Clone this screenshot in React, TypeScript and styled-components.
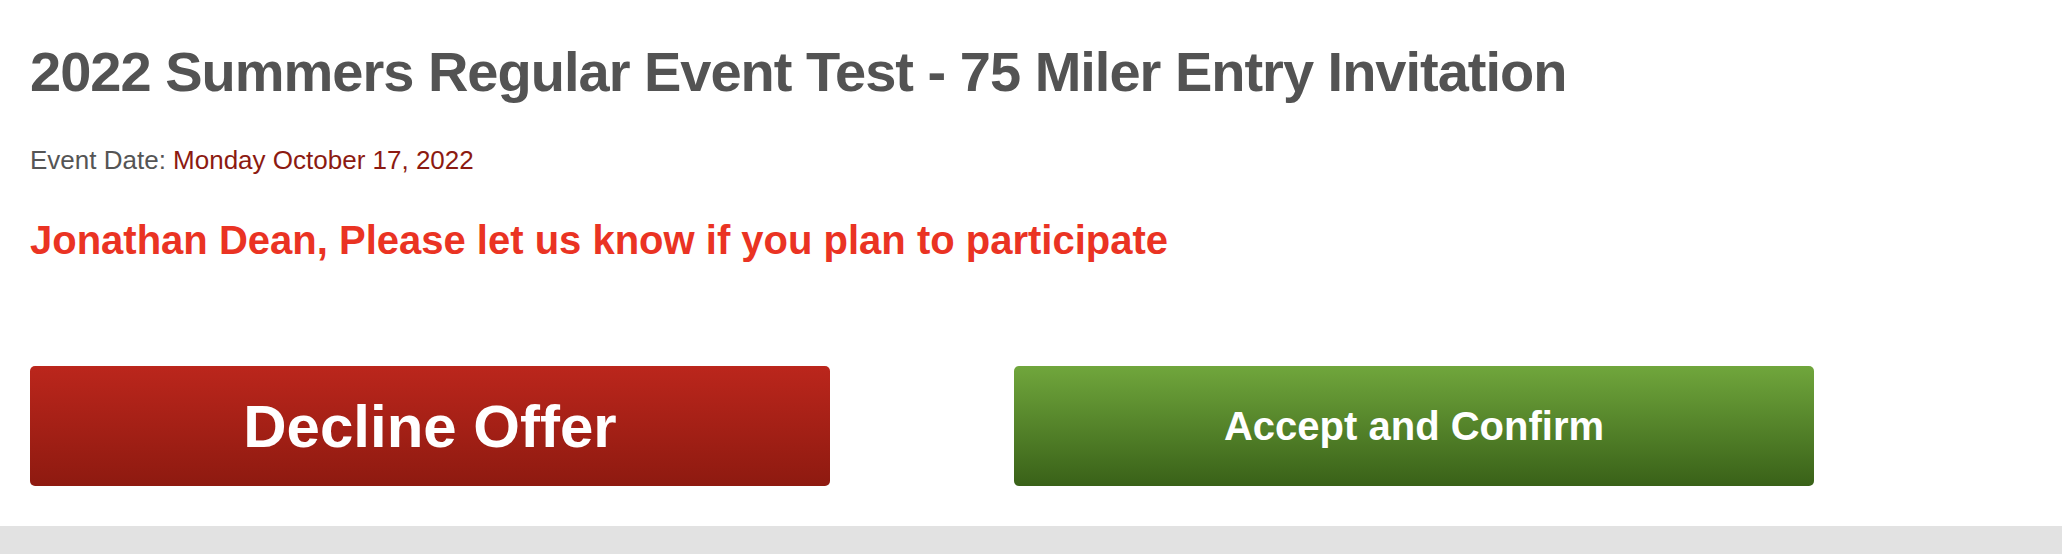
import styled, { createGlobalStyle } from "styled-components";

const GlobalStyle = createGlobalStyle`
  html, body {
    margin: 0;
    padding: 0;
    background: #ffffff;
    overflow: hidden;
  }

  body {
    font-family: "Liberation Sans", Helvetica, Arial, sans-serif;
  }
`;

const Page = styled.div`
  display: flex;
  flex-direction: column;
  min-height: 554px;
`;

const Invitation = styled.section`
  padding: 40px 30px 40px;
  display: flex;
  flex-direction: column;
`;

const Title = styled.h1`
  margin: 0;
  font-size: 56px;
  line-height: 64px;
  font-weight: 700;
  letter-spacing: -1px;
  color: #535353;
`;

const EventDate = styled.p`
  margin: 41px 0 0;
  font-size: 26px;
  line-height: 30px;
  color: #555555;
`;

const DateValue = styled.span`
  color: #8c1a11;
`;

const Prompt = styled.h2`
  margin: 42px 0 0;
  font-size: 40px;
  line-height: 46px;
  font-weight: 700;
  color: #ea3323;
`;

const Actions = styled.div`
  margin-top: 103px;
  display: flex;
  gap: 184px;
`;

const ActionButton = styled.button<{ $variant: "decline" | "accept" }>`
  width: 800px;
  height: 120px;
  display: flex;
  align-items: center;
  justify-content: center;
  border: none;
  border-radius: 5px;
  padding: 0;
  font-family: inherit;
  font-weight: 700;
  color: #ffffff;
  cursor: pointer;
  font-size: ${({ $variant }) => ($variant === "decline" ? "60px" : "40px")};
  background: ${({ $variant }) =>
    $variant === "decline"
      ? "linear-gradient(180deg, #bb261c 0%, #8e1a10 100%)"
      : "linear-gradient(180deg, #70a63c 0%, #396118 100%)"};
`;

const Footer = styled.div`
  height: 28px;
  background: #e2e2e2;
`;

function App() {
  return (
    <Page>
      <GlobalStyle />
      <Invitation>
        <Title>2022 Summers Regular Event Test - 75 Miler Entry Invitation</Title>

        <EventDate>
          Event Date: <DateValue>Monday October 17, 2022</DateValue>
        </EventDate>

        <Prompt>Jonathan Dean, Please let us know if you plan to participate</Prompt>

        <Actions>
          <ActionButton $variant="decline">Decline Offer</ActionButton>
          <ActionButton $variant="accept">Accept and Confirm</ActionButton>
        </Actions>
      </Invitation>
      <Footer />
    </Page>
  );
}

export default App;
